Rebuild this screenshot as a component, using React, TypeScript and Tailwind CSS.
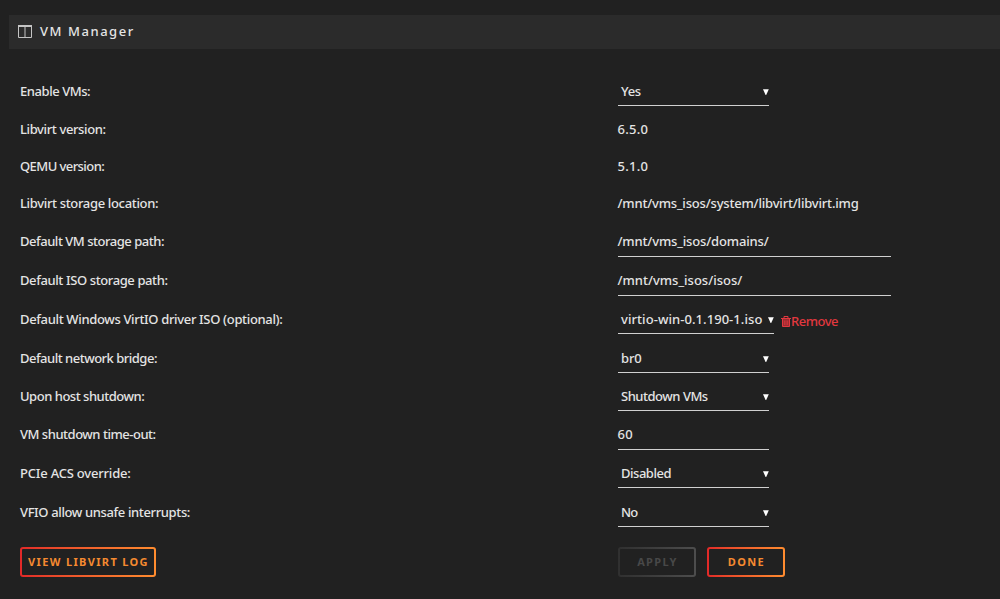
import React from "react";

type Row = {
  label: string;
  labelTracking: string;
  value: string;
  valueTracking: string;
  kind: "text" | "select" | "input";
  height: string;
  line?: string;
  width?: string;
  removable?: boolean;
};

const rows: Row[] = [
  { label: "Enable VMs:", labelTracking: "tracking-[-0.44px]", value: "Yes", valueTracking: "tracking-[-0.3px]", kind: "select", height: "h-[38px]", line: "h-[33px]", width: "w-[151.5px]" },
  { label: "Libvirt version:", labelTracking: "tracking-[-0.38px]", value: "6.5.0", valueTracking: "tracking-[0.25px]", kind: "text", height: "h-[37px]" },
  { label: "QEMU version:", labelTracking: "tracking-[-0.57px]", value: "5.1.0", valueTracking: "tracking-[0.25px]", kind: "text", height: "h-[37px]" },
  { label: "Libvirt storage location:", labelTracking: "tracking-[-0.34px]", value: "/mnt/vms_isos/system/libvirt/libvirt.img", valueTracking: "tracking-[-0.19px]", kind: "text", height: "h-[38px]" },
  { label: "Default VM storage path:", labelTracking: "tracking-[-0.47px]", value: "/mnt/vms_isos/domains/", valueTracking: "tracking-[-0.15px]", kind: "input", height: "h-[39px]", line: "h-[34px]", width: "w-[273.5px]" },
  { label: "Default ISO storage path:", labelTracking: "tracking-[-0.39px]", value: "/mnt/vms_isos/isos/", valueTracking: "tracking-[0px]", kind: "input", height: "h-[39px]", line: "h-[34px]", width: "w-[273.5px]" },
  { label: "Default Windows VirtIO driver ISO (optional):", labelTracking: "tracking-[-0.34px]", value: "virtio-win-0.1.190-1.iso", valueTracking: "tracking-[0.06px]", kind: "select", height: "h-[39px]", line: "h-[33px]", width: "w-[156px]", removable: true },
  { label: "Default network bridge:", labelTracking: "tracking-[-0.5px]", value: "br0", valueTracking: "tracking-[-0.1px]", kind: "select", height: "h-[38px]", line: "h-[33px]", width: "w-[151.5px]" },
  { label: "Upon host shutdown:", labelTracking: "tracking-[-0.48px]", value: "Shutdown VMs", valueTracking: "tracking-[-0.48px]", kind: "select", height: "h-[38px]", line: "h-[33px]", width: "w-[151.5px]" },
  { label: "VM shutdown time-out:", labelTracking: "tracking-[-0.48px]", value: "60", valueTracking: "tracking-[0.3px]", kind: "input", height: "h-[39px]", line: "h-[34px]", width: "w-[151.5px]" },
  { label: "PCIe ACS override:", labelTracking: "tracking-[-0.2px]", value: "Disabled", valueTracking: "tracking-[-0.48px]", kind: "select", height: "h-[39px]", line: "h-[33px]", width: "w-[151.5px]" },
  { label: "VFIO allow unsafe interrupts:", labelTracking: "tracking-[-0.37px]", value: "No", valueTracking: "tracking-[-0.8px]", kind: "select", height: "h-[39px]", line: "h-[33px]", width: "w-[151.5px]" },
];

function Caret() {
  return (
    <svg className="mt-4 h-[6px] w-[6px] shrink-0" viewBox="0 0 6 6">
      <path d="M0 .3h5.8L3.2 5.9H2.6z" fill="#fff" />
    </svg>
  );
}

function Value({ row }: { row: Row }) {
  const text = <span className={`leading-9 ${row.valueTracking}`}>{row.value}</span>;
  if (row.kind === "text") return text;
  return (
    <div className={`flex items-start justify-between border-b border-[#d0d0d0] ${row.line} ${row.width} ${row.kind === "select" ? "pl-[3.5px]" : ""}`}>
      {text}
      {row.kind === "select" && <Caret />}
    </div>
  );
}

function Remove() {
  return (
    <a className="ml-[7.5px] flex items-start text-[#e2383f]">
      <svg className="mt-[15px] h-[11px] w-[10px]" viewBox="0 0 10 11" fill="none" stroke="currentColor">
        <path d="M0 2.5h10M3 2V.5h4V2" />
        <path d="M1.5 3v7.5h7V3" fill="#9c2c31" />
        <path d="M3.5 4.5v4.5M5 4.5v4.5M6.5 4.5v4.5" strokeWidth=".6" />
      </svg>
      <span className="pt-[2px] leading-9 tracking-[-0.5px]">Remove</span>
    </a>
  );
}

function Button({ children, width, disabled }: { children: string; width: string; disabled?: boolean }) {
  return (
    <button
      className={`h-[30px] rounded-[3px] p-[2px] text-[11px] font-bold ${width} ${
        disabled ? "bg-linear-to-r from-[#303030] to-[#4d4d4d] text-[#484848]" : "bg-linear-to-r from-[#e22828] to-[#ff8c2f] text-[#f58a30]"
      }`}
    >
      <span className="flex h-full items-center justify-center rounded-[1px] bg-[#212121] pl-px tracking-[1.35px]">{children}</span>
    </button>
  );
}

export default function App() {
  return (
    <main className="h-[599px] w-[1000px] overflow-hidden bg-[#212121] pt-[15px] font-['Noto_Sans',sans-serif] text-[13px] font-medium whitespace-nowrap text-[#e4e4e4]">
      <header className="ml-[9px] flex h-[34px] items-center bg-[#2b2b2b] pl-[9px]">
        <svg className="mb-px h-[13px] w-[14px]" viewBox="0 0 14 13" fill="none" stroke="#c4c4c4">
          <path d="M.5.5h13v12H.5zM7 1v11" />
          <path d="M0 1h14" strokeWidth="2" />
        </svg>
        <h1 className="ml-2 pb-px text-[13px] font-medium tracking-[1.55px]">VM Manager</h1>
      </header>
      <section className="mt-6 ml-5">
        {rows.map((row) => (
          <div key={row.label} className={`flex items-start ${row.height}`}>
            <span className={`w-[597.5px] shrink-0 leading-9 ${row.labelTracking}`}>{row.label}</span>
            <Value row={row} />
            {row.removable && <Remove />}
          </div>
        ))}
      </section>
      <footer className="mt-[14px] ml-5 flex">
        <div className="w-[598px]"><Button width="w-[136px]">VIEW LIBVIRT LOG</Button></div>
        <div className="flex gap-[11px]">
          <Button width="w-[78px]" disabled>APPLY</Button>
          <Button width="w-[78px]">DONE</Button>
        </div>
      </footer>
    </main>
  );
}
